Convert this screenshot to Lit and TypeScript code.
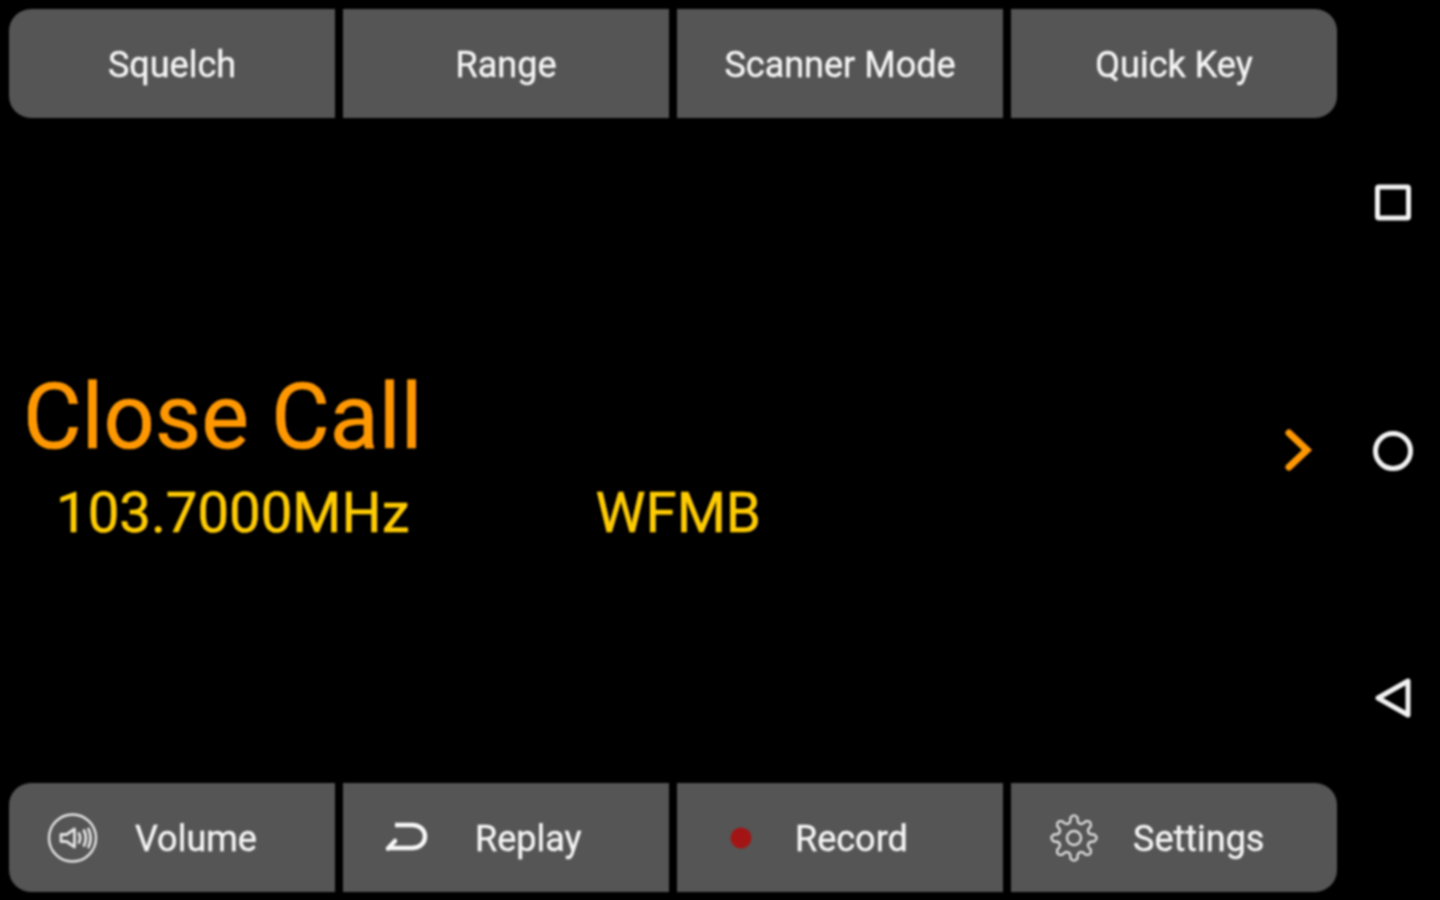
import { LitElement, html, css } from "lit";
import { customElement } from "lit/decorators.js";

const volumeIcon = html`<svg class="ico" width="52" height="52" viewBox="0 0 52 52" fill="none" stroke="#e4e4e4">
  <circle cx="25.500" cy="26" r="23.5" stroke-width="2.4"/>
  <path d="M14 22.5h5.5l8-5.500v18l-8-5.500h-5.500z" stroke-width="2.800" stroke-linejoin="round"/>
  <path d="M32 21.500c1.500 3 1.500 6 0 9M37 18.500c2.500 5 2.500 10 0 15M41.500 17c2.800 6 2.800 12 0 18" stroke-width="2.800" stroke-linecap="round"/>
</svg>`;

const replayIcon = html`<svg class="ico" width="44" height="34" viewBox="0 0 44 34" fill="none" stroke="#f8f8f8">
  <path d="M11 4H28C36 4 41 9 41 15.500C41 22 36 27 28 27H4" stroke-width="4.500"/>
  <path d="M4 27.500L11 20" stroke-width="4.500" stroke-linecap="round"/>
</svg>`;

const recordIcon = html`<svg class="ico" width="22" height="22" viewBox="0 0 22 22"><circle cx="11" cy="11" r="10.500" fill="#a31515"/></svg>`;

function gearPath() {
  const n = 8;
  const parts: string[] = [];
  for (let i = 0; i < n; i++) {
    const a = (i * 360) / n;
    const p = (r: number, d: number) => {
      const t = ((a + d - 90) * Math.PI) / 180;
      return `${(r * Math.cos(t)).toFixed(2)} ${(r * Math.sin(t)).toFixed(2)}`;
    };
    parts.push(`${i ? "" : "M" + p(15.5, -22.5)} Q${p(15.5, -12)} ${p(20.5, -10)} Q${p(25, 0)} ${p(20.5, 10)} Q${p(15.5, 12)} ${p(15.5, 22.5)}`);
  }
  return parts.join(" ") + "Z";
}

const gearIcon = html`<svg class="ico" width="48" height="48" viewBox="-24 -24 48 48" fill="none" stroke="#dcdcdc" stroke-width="2.400">
  <circle r="7"/>
  <path stroke-linejoin="round" d="${gearPath()}"/>
</svg>`;

@customElement("app-root")
export class AppRoot extends LitElement {
  static styles = css`
    :host {
      display: block;
      width: 1440px;
      height: 900px;
      background: #000;
      font-family: Roboto, "Liberation Sans", sans-serif;
      overflow: hidden;
    }
    .screen {
      display: flex;
      height: 100%;
      background: #000;
      filter: blur(0.85px);
    }
    .main {
      width: 1346px;
      display: flex;
      flex-direction: column;
      padding: 9px 0 8px 9px;
      box-sizing: border-box;
    }
    .bar {
      display: grid;
      grid-template-columns: repeat(4, 326px);
      column-gap: 8px;
      height: 109px;
      flex: none;
    }
    .btn {
      background: #555;
      color: #f4f4f4;
      font-size: 36px;
      display: flex;
      align-items: center;
      justify-content: center;
      -webkit-text-stroke: 0.4px #f4f4f4;
    }
    .btn span { padding-top: 2px; }
    .btn:first-child { border-radius: 22px 0 0 22px; }
    .btn:last-child { border-radius: 0 22px 22px 0; }
    .btn.iconic { justify-content: flex-start; }
    .ico { flex: none; display: block; }
    .vol { padding-left: 38px; gap: 36px; }
    .rep { padding-left: 41px; gap: 47px; }
    .rec { padding-left: 53px; gap: 43px; }
    .set { padding-left: 39px; gap: 35px; }
    .center {
      flex: 1;
      display: flex;
      align-items: center;
      justify-content: space-between;
      padding: 0 33px 0 14px;
    }
    .title {
      color: #ff9800;
      font-size: 90px;
      line-height: 98px;
      margin-top: 14px;
      -webkit-text-stroke: 0.6px #ff9800;
    }
    .info {
      display: flex;
      color: #ffcc00;
      font-size: 56.3px;
      line-height: 66px;
      padding-left: 33px;
      gap: 186px;
      margin-top: 13px;
      -webkit-text-stroke: 0.5px #ffcc00;
    }
    .chev { display: block; margin-top: -1px; }
    .nav {
      flex: 1;
      display: flex;
      flex-direction: column;
      align-items: center;
      padding-top: 183px;
      gap: 207.5px;
    }
    .nav svg { display: block; }
  `;

  render() {
    return html`
      <div class="screen">
        <div class="main">
          <div class="bar">
            <div class="btn"><span>Squelch</span></div>
            <div class="btn"><span>Range</span></div>
            <div class="btn"><span>Scanner Mode</span></div>
            <div class="btn"><span>Quick Key</span></div>
          </div>
          <div class="center">
            <div>
              <div class="title">Close Call</div>
              <div class="info"><span>103.7000MHz</span><span>WFMB</span></div>
            </div>
            <svg class="chev" width="28" height="42" viewBox="0 0 28 42" fill="none" stroke="#ff9800" stroke-width="7" stroke-linecap="round" stroke-linejoin="miter">
              <path d="M4 4L22 21L4 38"/>
            </svg>
          </div>
          <div class="bar">
            <div class="btn iconic vol">${volumeIcon}<span>Volume</span></div>
            <div class="btn iconic rep">${replayIcon}<span>Replay</span></div>
            <div class="btn iconic rec">${recordIcon}<span>Record</span></div>
            <div class="btn iconic set">${gearIcon}<span>Settings</span></div>
          </div>
        </div>
        <div class="nav">
          <svg width="40" height="40" viewBox="0 0 40 40" fill="none" stroke="#f2f2f2" stroke-width="5"><rect x="4.500" y="4" width="31" height="31" rx="1.500"/></svg>
          <svg width="40" height="40" viewBox="0 0 40 40" fill="none" stroke="#f2f2f2" stroke-width="5"><circle cx="20" cy="20" r="17.500"/></svg>
          <svg width="40" height="40" viewBox="0 0 40 40" fill="none" stroke="#f2f2f2" stroke-width="5" stroke-linejoin="round"><path d="M5 20L35 3V37Z"/></svg>
        </div>
      </div>
    `;
  }
}
